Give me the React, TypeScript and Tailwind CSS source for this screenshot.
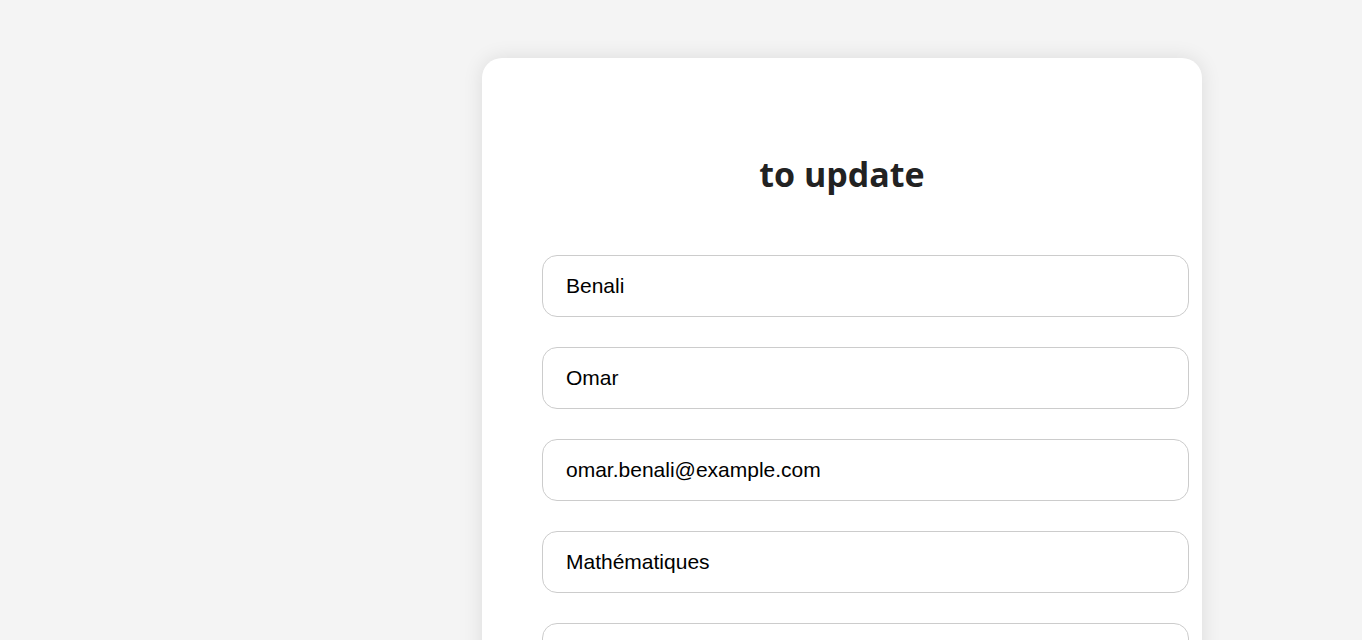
import React from "react";

function UpdateForm() {
  const fields = [
    { name: "nom", value: "Benali", type: "text" },
    { name: "prenom", value: "Omar", type: "text" },
    { name: "email", value: "omar.benali@example.com", type: "email" },
    { name: "matiere", value: "Mathématiques", type: "text" },
    { name: "telephone", value: "", type: "text" },
  ];

  return (
    <div className="min-h-screen bg-[#f4f4f4] flex justify-center pl-[322px] pt-[58px] overflow-hidden">
      <div className="w-[720px] bg-white rounded-[20px] shadow-[0_0_20px_rgba(0,0,0,0.1)] pt-[96px] pl-[60px] pb-10 shrink-0">
        <h2
          className="text-center text-[34px] leading-10 font-bold text-[#222] pr-[60px]"
          style={{ fontFamily: '"Open Sans", "Noto Sans", sans-serif' }}
        >
          to update
        </h2>

        <form className="flex flex-col gap-[30px] mt-[61px]">
          {fields.map((f) => (
            <input
              key={f.name}
              name={f.name}
              type={f.type}
              defaultValue={f.value}
              readOnly
              className="w-[647px] h-[62px] border border-[#cccccc] rounded-[15px] pl-[23px] pr-[22px] text-[21px] text-black bg-white outline-none"
              style={{ fontFamily: '"Liberation Sans", Arial, sans-serif' }}
            />
          ))}
        </form>
      </div>
    </div>
  );
}

export default UpdateForm;
